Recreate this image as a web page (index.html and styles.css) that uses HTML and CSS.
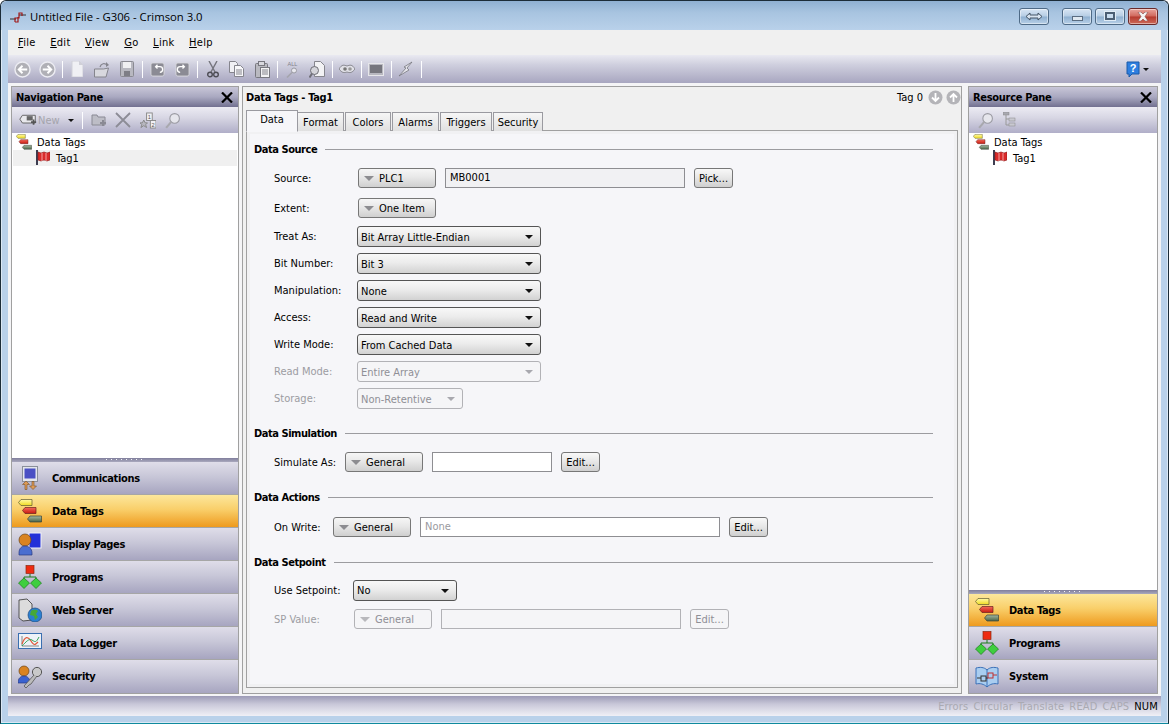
FILE: index.html
```html
<!DOCTYPE html>
<html lang="en">
<head>
<meta charset="utf-8">
<title>Untitled File - G306 - Crimson 3.0</title>
<link rel="stylesheet" href="styles.css">
</head>
<body>
<svg class="defs" width="0" height="0" aria-hidden="true">
  <defs>
    <linearGradient id="gy" x1="0" y1="0" x2="0" y2="1"><stop offset="0" stop-color="#fff9a8"/><stop offset="1" stop-color="#f0dc20"/></linearGradient>
    <linearGradient id="gr" x1="0" y1="0" x2="0" y2="1"><stop offset="0" stop-color="#f46a5a"/><stop offset="1" stop-color="#c81a10"/></linearGradient>
    <linearGradient id="gg" x1="0" y1="0" x2="0" y2="1"><stop offset="0" stop-color="#a4b8a0"/><stop offset="1" stop-color="#4a6448"/></linearGradient>
  </defs>
  <symbol id="tags" viewBox="0 0 24 24">
    <path d="M3 .5h11v6H3L.5 3.500z" fill="url(#gy)" stroke="#5e5a30" stroke-width=".7"/>
    <path d="M7 8.500h11v6H7L4.500 11.500z" fill="url(#gr)" stroke="#6a2020" stroke-width=".7"/>
    <path d="M12 17h11.500v6H12l-2.500-3z" fill="url(#gg)" stroke="#3a4438" stroke-width=".7"/>
  </symbol>
  <symbol id="flag" viewBox="0 0 14 16">
    <path d="M1 0v15" stroke="#3d3d50" stroke-width="2"/>
    <path d="M2 2l3 1 3-1 3 1 3-1v8l-3 1-3-1-3 1-3-1z" fill="#d92a2a" stroke="#8a1a1a" stroke-width=".6"/>
    <path d="M6 3v8M10 3v8" stroke="#f3a0a0"/>
  </symbol>
  <symbol id="comm" viewBox="0 0 24 24">
    <rect x="4.500" y=".5" width="15" height="15" fill="#e4e6ec" stroke="#8a8f9a"/>
    <rect x="6.500" y="2.500" width="11" height="10" fill="#4a50c4"/>
    <path d="M7 15l-3.500 3.500H6v5h2v-5h2.500zM14 23.500l3.500-3.500H15v-4.500h-2V20h-2.500z" fill="#dd9a55" stroke="#7a5025" stroke-width=".6" transform="translate(1 0)"/>
  </symbol>
  <symbol id="pages" viewBox="0 0 24 24">
    <rect x="11" y="1" width="12" height="15" fill="#2330d8" stroke="#f2f2fa"/>
    <circle cx="7" cy="8" r="6" fill="#d98320" stroke="#6a4418" stroke-width=".7"/>
    <path d="M1 21c0-5 3-7 6-7s7 2 7 7v2H1z" fill="#4a6ed0" stroke="#2a3a80" stroke-width=".7"/>
  </symbol>
  <symbol id="prog" viewBox="0 0 24 24">
    <rect x="8" y=".5" width="8" height="8" fill="#ee2b10" stroke="#8a2a10" stroke-width=".7"/>
    <path d="M12 9v3M6 15v-3h12v3" fill="none" stroke="#1d7a1d"/>
    <path d="M6 13l5.500 5L6 23.500.5 18zM18 13l5.500 5-5.500 5.500L12.500 18z" fill="#3fce3f" stroke="#1d7a1d" stroke-width=".7"/>
  </symbol>
  <symbol id="web" viewBox="0 0 24 24">
    <path d="M1 2l8-1 5 5v16l-9 1-4-3z" fill="#dcdcdc" stroke="#333" stroke-width=".8"/>
    <circle cx="17" cy="17" r="7" fill="#2b7fd0" stroke="#1b4a80" stroke-width=".7"/>
    <path d="M13 13c3-2 6-1 7 0l-2 3 2 3-3 3-1-4-4-1z" fill="#45a83a"/>
  </symbol>
  <symbol id="logger" viewBox="0 0 24 20">
    <rect x=".5" y=".5" width="23" height="15" fill="#eef2f8" stroke="#3a6fb0"/>
    <path d="M4 3v10h17" fill="none" stroke="#888"/>
    <path d="M4 11c3-8 6-8 9-3s4 4 7 1" fill="none" stroke="#e05a3a" stroke-width="1.200"/>
    <path d="M4 13c4-4 7-8 10-6s4 3 7-3" fill="none" stroke="#35a35a"/>
  </symbol>
  <symbol id="security" viewBox="0 0 24 24">
    <circle cx="6" cy="6" r="5" fill="#d98320" stroke="#6a4418" stroke-width=".7"/>
    <path d="M0 18c0-5 3-7 6-7s6 2 6 7z" fill="#3a62d0" stroke="#2a3a80" stroke-width=".7"/>
    <circle cx="19" cy="7" r="4.600" fill="#c9c9c9" stroke="#555"/>
    <path d="M16 10L6 21l2 2 3-3 2-1 6-8" fill="#bbb" stroke="#555" stroke-width=".8"/>
  </symbol>
  <symbol id="system" viewBox="0 0 24 22">
    <path d="M1 2c4-1 8-1 11 2 3-3 7-3 11-2v16c-4-1-8 0-11 3-3-3-7-4-11-3z" fill="#a9cdf0" stroke="#3a70b8"/>
    <path d="M12 4v17" stroke="#3a70b8"/>
    <rect x="6" y="10" width="5" height="5" fill="none" stroke="#333"/>
    <path d="M2 12h4M11 12h2" stroke="#333"/>
    <rect x="13" y="7" width="5" height="5" fill="none" stroke="#c03030"/>
    <path d="M18 9h4" stroke="#c03030"/>
  </symbol>
  <symbol id="search" viewBox="0 0 16 16">
    <circle cx="10" cy="6" r="4.500" fill="#e6e6ec" stroke="#9a9aa2"/>
    <path d="M7 9l-5 6" stroke="#a8a8ae" stroke-width="2"/>
  </symbol>
  <symbol id="closex" viewBox="0 0 12 11">
    <path d="M1 .5l10 10M11 .5L1 10.500" stroke="#000" stroke-width="2.200"/>
  </symbol>
</svg>

<div class="window">
  <header class="titlebar">
    <svg class="app-logo" width="16" height="14" viewBox="0 0 16 14"><path d="M0 9h6M9 5h7" stroke="#333" fill="none"/><path d="M5 12V8h4V3h3v3M5 12h3V7" stroke="#a01818" fill="none" stroke-width="1.200"/></svg>
    <span class="title-text">Untitled File - G306 - Crimson 3.0</span>
    <div class="caption-buttons">
      <button class="cap cap-switch" aria-label="Switch"><svg width="18" height="9" viewBox="0 0 18 9"><path d="M1 4.500L5 1v2h8V1l4 3.500L13 8V6H5v2z" fill="#d8e4f0" stroke="#445566"/></svg></button>
      <button class="cap cap-min" aria-label="Minimise"><i class="min-glyph"></i></button>
      <button class="cap cap-max" aria-label="Maximise"><i class="max-glyph"></i></button>
      <button class="cap cap-close" aria-label="Close"><svg width="12" height="9" viewBox="0 0 12 9"><path d="M1 0h3l2 2 2-2h3L8 4.500 11 9H8L6 7 4 9H1l3-4.500z" fill="#f4f4f4" stroke="#703030" stroke-width=".5"/></svg></button>
    </div>
  </header>

  <div class="client">
    <nav class="menubar">
      <span><u>F</u>ile</span><span><u>E</u>dit</span><span><u>V</u>iew</span><span><u>G</u>o</span><span><u>L</u>ink</span><span><u>H</u>elp</span>
    </nav>

    <div class="toolbar">
      <svg width="17" height="17" viewBox="0 0 18 18"><circle cx="9" cy="9" r="8" fill="#b0b0b6" stroke="#ececf2" stroke-width="1.500"/><path d="M14 9H6M9 5L5 9l4 4" stroke="#fff" stroke-width="2" fill="none"/></svg>
      <svg class="g8" width="17" height="17" viewBox="0 0 18 18"><circle cx="9" cy="9" r="8" fill="#b0b0b6" stroke="#ececf2" stroke-width="1.500"/><path d="M4 9h8M9 5l4 4-4 4" stroke="#fff" stroke-width="2" fill="none"/></svg>
      <i class="tsep g6"></i>
      <svg class="g8" width="12" height="16" viewBox="0 0 12 16"><path d="M1 0h7l4 4v12H1z" fill="#f0f0f4" stroke="#d0d0d8"/><path d="M8 0v4h4" fill="#d0d0d8"/></svg>
      <svg class="g11" width="16" height="17" viewBox="0 0 16 17"><path d="M.5 8h9l5-1-2.500 9H.5z" fill="#d8d8de" stroke="#85858d"/><path d="M6 6c1-4 5-4 7-2" stroke="#85858d" fill="none" stroke-width="1.200"/><path d="M12 1l3 3-3 2z" fill="#85858d"/></svg>
      <svg class="g10" width="14" height="16" viewBox="0 0 14 16"><rect x=".5" y=".5" width="13" height="15" rx="1" fill="#b8b8c0" stroke="#8a8a92"/><rect x="3" y="1" width="8" height="6" fill="#f0f0f2"/><rect x="4" y="10" width="6" height="5" fill="#7e7e86"/></svg>
      <i class="tsep g8"></i>
      <svg class="g7" width="15" height="15" viewBox="0 0 16 16"><rect x="1" y="1" width="14" height="14" rx="2" fill="#8b8b94" stroke="#dadade"/><path d="M10.500 11a3 3 0 0 0 0-6H6M8 3L6 5l2 2" stroke="#fff" fill="none" stroke-width="1.400"/></svg>
      <svg class="g10" width="15" height="15" viewBox="0 0 16 16"><rect x="1" y="1" width="14" height="14" rx="2" fill="#8b8b94" stroke="#dadade"/><path d="M5.500 11a3 3 0 0 1 0-6H10M8 3l2 2-2 2" stroke="#fff" fill="none" stroke-width="1.400"/></svg>
      <i class="tsep g7"></i>
      <svg class="g9" width="12" height="17" viewBox="0 0 12 17"><path d="M2 0l6 11M10 0L4 11" stroke="#74747c" stroke-width="1.400"/><circle cx="3" cy="13.500" r="2.300" fill="none" stroke="#4e4e56" stroke-width="1.400"/><circle cx="9" cy="13.500" r="2.300" fill="none" stroke="#4e4e56" stroke-width="1.400"/></svg>
      <svg class="g10" width="15" height="16" viewBox="0 0 15 16"><path d="M.5.5h6l2 2v9H.5z" fill="#f0f0f4" stroke="#85858d"/><path d="M5.500 4.500h6l3 3v8h-9z" fill="#f8f8fa" stroke="#85858d"/><path d="M7 9h6M7 11h6M7 13h6" stroke="#85858d"/></svg>
      <svg class="g11" width="15" height="17" viewBox="0 0 15 17"><rect x=".5" y="2.500" width="12" height="14" rx="1" fill="#b9b9c0" stroke="#77777f"/><rect x="3.500" y=".5" width="6" height="4" fill="#d8d8de" stroke="#77777f"/><rect x="5.500" y="6.500" width="9" height="10" fill="#f2f2f4" stroke="#77777f"/><path d="M7 9h6M7 11h6M7 13h6" stroke="#85858d"/></svg>
      <i class="tsep g7"></i>
      <svg class="g7" width="15" height="17" viewBox="0 0 15 17"><text x="7.500" y="5" class="all-txt">ALL</text><circle cx="9" cy="9.500" r="2.500" fill="#e8e8ee" stroke="#9a9aa2"/><path d="M7 11.500l-5 5" stroke="#a4a4ac" stroke-width="1.600"/></svg>
      <svg class="g9" width="16" height="17" viewBox="0 0 16 17"><path d="M5.500.5h6l4 4v11h-10z" fill="#f2f2f4" stroke="#85858d"/><circle cx="5.500" cy="9.500" r="4" fill="#d4d4da" stroke="#6e6e76"/><path d="M3 12.500l-2.500 4" stroke="#6e6e76" stroke-width="2"/></svg>
      <i class="tsep g7"></i>
      <svg class="g6" width="16" height="10" viewBox="0 0 16 10"><path d="M0 5c3-5 5-4 8-3 3-1 5-2 8 3-3 4-5 4-8 3-3 1-5 1-8-3z" fill="#e0e0e6" stroke="#8a8a92"/><circle cx="6" cy="5" r="1.800" fill="#777"/><circle cx="11" cy="5" r="1.800" fill="#999"/></svg>
      <i class="tsep g6"></i>
      <svg class="g6" width="16" height="13" viewBox="0 0 16 13"><rect x=".5" y=".5" width="15" height="12" fill="#b8b8c0" stroke="#e6e6ea"/><rect x="2" y="2" width="12" height="8" fill="#76767e"/></svg>
      <i class="tsep g7"></i>
      <svg class="g6" width="16" height="16" viewBox="0 0 16 16"><path d="M14 1L6 6l2 1-7 8 10-6-2-2z" fill="#e4e4ea" stroke="#77777f" stroke-width=".8"/></svg>
      <i class="tsep g7"></i>
      <span class="help-wrap">
        <svg width="14" height="17" viewBox="0 0 14 17"><path d="M1 1h12v12H6l-3 3v-3H1z" fill="#2e7fe0" stroke="#1a5aa8"/><text x="7" y="11" class="help-q">?</text></svg>
        <i class="caret-black"></i>
      </span>
    </div>

    <main class="workspace">
      <aside class="pane pane-nav">
        <div class="pane-head"><b>Navigation Pane</b><svg class="x" width="12" height="11"><use href="#closex"/></svg></div>
        <div class="pane-tools">
          <svg width="18" height="14" viewBox="0 0 21 15"><path d="M4 2h15v9H4L1 6.500z" fill="#e8e8ec" stroke="#555"/><rect x="9" y="3" width="7" height="5" fill="#666"/><path d="M14 10h6M17 7v6" stroke="#555" stroke-width="2"/></svg>
          <span class="new-txt">New</span><i class="caret-black caret-new"></i><i class="tsep tsep-new"></i>
          <svg class="pt-folder" width="16" height="14" viewBox="0 0 16 14"><path d="M1 2h5l1 2h7v8H1z" fill="#bdbdc6" stroke="#8a8a94"/><path d="M9 10h6M12 7v6" stroke="#8a8a94" stroke-width="2"/></svg>
          <svg class="pt-del" width="16" height="16" viewBox="0 0 16 16"><path d="M1 1l14 14M15 1L1 15" stroke="#8c8c96" stroke-width="1.800"/></svg>
          <svg class="pt-sort" width="16" height="17" viewBox="0 0 17 17"><rect x="7" y=".5" width="6" height="8" fill="#f0f0f4" stroke="#888"/><text x="10" y="7" class="sort-txt">1</text><rect x="11" y="8.500" width="6" height="8" fill="#f0f0f4" stroke="#888"/><text x="14" y="15" class="sort-txt">2</text><path d="M4 8l1.500 3H8l-2 2 1 3-3-2-3 2 1-3-2-2h2.500z" fill="#b8b8c0" stroke="#888"/></svg>
          <svg class="pt-search" width="17" height="17"><use href="#search"/></svg>
        </div>
        <div class="tree tree-nav">
          <div class="tree-root"><svg width="16" height="16"><use href="#tags"/></svg><span>Data Tags</span></div>
          <div class="tree-item tree-sel"><svg width="14" height="16"><use href="#flag"/></svg><span>Tag1</span></div>
        </div>
        <div class="splitter"><i></i></div>
        <div class="nav-btn"><svg width="24" height="24"><use href="#comm"/></svg><b>Communications</b></div>
        <div class="nav-btn nav-active"><svg width="24" height="24"><use href="#tags"/></svg><b>Data Tags</b></div>
        <div class="nav-btn"><svg width="24" height="24"><use href="#pages"/></svg><b>Display Pages</b></div>
        <div class="nav-btn"><svg width="24" height="24"><use href="#prog"/></svg><b>Programs</b></div>
        <div class="nav-btn"><svg width="24" height="24"><use href="#web"/></svg><b>Web Server</b></div>
        <div class="nav-btn"><svg width="24" height="20"><use href="#logger"/></svg><b>Data Logger</b></div>
        <div class="nav-btn"><svg width="24" height="24"><use href="#security"/></svg><b>Security</b></div>
      </aside>

      <section class="editor">
        <div class="editor-head">
          <b>Data Tags - Tag1</b>
          <span class="tag-nav">Tag 0
            <svg width="15" height="15" viewBox="0 0 15 15"><circle cx="7.500" cy="7.500" r="7" fill="#b4b4b8"/><path d="M7.500 3v8M4 7.500l3.500 3.500L11 7.500" stroke="#fff" stroke-width="1.800" fill="none"/></svg>
            <svg width="15" height="15" viewBox="0 0 15 15"><circle cx="7.500" cy="7.500" r="7" fill="#b4b4b8"/><path d="M7.500 12V4M4 7.500L7.500 4 11 7.500" stroke="#fff" stroke-width="1.800" fill="none"/></svg>
          </span>
        </div>
        <div class="tabs">
          <span class="tab tab-active">Data</span><span class="tab t-format">Format</span><span class="tab t-colors">Colors</span><span class="tab t-alarms">Alarms</span><span class="tab t-triggers">Triggers</span><span class="tab t-security">Security</span>
        </div>
        <div class="panel">
          <h3 class="group group-first"><span>Data Source</span></h3>
          <div class="row row-30"><label>Source:</label><span class="btn b78"><i class="tri"></i>PLC1</span><span class="field f-mb">MB0001</span><span class="btn-small">Pick...</span></div>
          <div class="row row-30"><label>Extent:</label><span class="btn b78"><i class="tri"></i>One Item</span></div>
          <div class="row"><label>Treat As:</label><span class="select s184">Bit Array Little-Endian<i class="caret-black"></i></span></div>
          <div class="row"><label>Bit Number:</label><span class="select s184">Bit 3<i class="caret-black"></i></span></div>
          <div class="row"><label>Manipulation:</label><span class="select s184">None<i class="caret-black"></i></span></div>
          <div class="row"><label>Access:</label><span class="select s184">Read and Write<i class="caret-black"></i></span></div>
          <div class="row"><label>Write Mode:</label><span class="select s184">From Cached Data<i class="caret-black"></i></span></div>
          <div class="row dis"><label>Read Mode:</label><span class="select s184">Entire Array<i class="caret-black"></i></span></div>
          <div class="row dis"><label>Storage:</label><span class="select s106">Non-Retentive<i class="caret-black"></i></span></div>

          <h3 class="group"><span>Data Simulation</span></h3>
          <div class="row row-sim"><label class="l-sim">Simulate As:</label><span class="btn b78"><i class="tri"></i>General</span><span class="field f-sim"></span><span class="btn-small">Edit...</span></div>

          <h3 class="group group-12"><span>Data Actions</span></h3>
          <div class="row row-write"><label class="l-write">On Write:</label><span class="btn b78"><i class="tri"></i>General</span><span class="field f-write">None</span><span class="btn-small">Edit...</span></div>

          <h3 class="group group-12"><span>Data Setpoint</span></h3>
          <div class="row row-set"><label class="l-set">Use Setpoint:</label><span class="select s104">No<i class="caret-black"></i></span></div>
          <div class="row row-sp dis"><label class="l-sp">SP Value:</label><span class="btn b78"><i class="tri"></i>General</span><span class="field f-sp"></span><span class="btn-small">Edit...</span></div>
        </div>
      </section>

      <aside class="pane pane-res">
        <div class="pane-head"><b>Resource Pane</b><svg class="x" width="12" height="11"><use href="#closex"/></svg></div>
        <div class="pane-tools">
          <svg class="pr-search" width="17" height="17"><use href="#search"/></svg>
          <svg class="pr-tree" width="14" height="16" viewBox="0 0 14 16"><rect x="0" y="0" width="6" height="3" fill="#a8a8b0" stroke="#888" stroke-width=".5"/><rect x="6" y="6" width="6" height="3" fill="#c8c8d0" stroke="#888" stroke-width=".5"/><rect x="6" y="11" width="6" height="3" fill="#c8c8d0" stroke="#888" stroke-width=".5"/><path d="M3 3v10h3M3 7h3" stroke="#999" fill="none"/></svg>
        </div>
        <div class="tree tree-res">
          <div class="tree-root"><svg width="16" height="16"><use href="#tags"/></svg><span>Data Tags</span></div>
          <div class="tree-item"><svg width="14" height="16"><use href="#flag"/></svg><span>Tag1</span></div>
        </div>
        <div class="splitter"><i></i></div>
        <div class="nav-btn nav-active"><svg width="24" height="24"><use href="#tags"/></svg><b>Data Tags</b></div>
        <div class="nav-btn"><svg width="24" height="24"><use href="#prog"/></svg><b>Programs</b></div>
        <div class="nav-btn"><svg width="24" height="22"><use href="#system"/></svg><b>System</b></div>
      </aside>
    </main>

    <footer class="statusbar">
      <span>Errors</span><span>Circular</span><span>Translate</span><span>READ</span><span>CAPS</span><span class="on">NUM</span>
    </footer>
  </div>
</div>
</body>
</html>
```

FILE: styles.css
```css
* { box-sizing: border-box; }
html, body { margin: 0; padding: 0; width: 1169px; height: 724px; overflow: hidden; background: #fff; }
body, button { font-family: "DejaVu Sans Condensed", "DejaVu Sans", sans-serif; font-stretch: condensed; font-size: 11px; color: #000; }
.defs { position: absolute; }
u { text-decoration: underline; }
i { display: block; font-style: normal; }

.window {
  width: 1169px; height: 724px; display: flex; flex-direction: column;
  background: #b9d1ea; border: 1px solid #1c2c38; border-bottom-color: #0f8a9e; border-radius: 6px 6px 0 0;
  box-shadow: inset 0 0 0 1px #dbe8f4;
}
.titlebar {
  height: 29px; display: flex; align-items: center; padding: 2px 0 0 9px; flex: none;
  background: linear-gradient(to bottom, #8fb0d2 0, #a8c4e0 40%, #b9d1ea 100%);
  border-radius: 6px 6px 0 0;
}
.app-logo { margin-right: 4px; }
.title-text { font-family: "Open Sans", sans-serif; font-stretch: normal; font-size: 11.300px; color: #000; }
.caption-buttons { margin-left: auto; display: flex; margin-right: 10px; margin-top: -1px; }
.cap {
  height: 17px; width: 30px; border: 1px solid #4e6a86; border-radius: 3px; padding: 0; display: flex; align-items: center; justify-content: center;
  background: linear-gradient(to bottom, #d8e6f4 0, #b6cde4 48%, #8fb0d0 52%, #b8d0e8 100%); margin-left: 3px;
  box-shadow: inset 0 0 0 1px rgba(255,255,255,.45);
}
.cap-switch { margin-right: 10px; }
.cap-close { background: linear-gradient(to bottom, #e9a49c 0, #d0685c 48%, #b63a2e 52%, #cc6a5a 100%); border-color: #6a2a2a; }
.min-glyph { width: 11px; height: 5px; margin-top: 5px; background: #dfe8f0; border: 1px solid #5a6c80; }
.max-glyph { width: 10px; height: 8px; border: 2px solid #4a5e74; background: #c8dcef; box-shadow: 0 0 0 1px #e0ecf6; }

.client { flex: 1; min-height: 0; display: flex; flex-direction: column; margin: 0 7px 7px; background: #f0f0f0; }
.menubar { height: 25px; flex: none; display: flex; align-items: center; padding: 0 0 1px 10px; background: #f0f0f0; letter-spacing: .3px; }
.menubar span { margin-right: 14.500px; }
.toolbar {
  height: 28px; flex: none; display: flex; align-items: center; padding: 0 12px 0 6px;
  background: linear-gradient(to bottom, #e9e9f1 0, #cfcfde 35%, #a8a6c0 100%);
}
.toolbar svg { flex: none; }
.g6 { margin-left: 6px; }
.g7 { margin-left: 7px; }
.g8 { margin-left: 8px; }
.g9 { margin-left: 9px; }
.g10 { margin-left: 10px; }
.g11 { margin-left: 11px; }
.tsep { width: 1px; height: 17px; background: #fdfdff; flex: none; }
.all-txt { font: 5.500px "Liberation Sans", sans-serif; fill: #83838b; text-anchor: middle; }
.sort-txt { font: 6px "Liberation Sans", sans-serif; fill: #555; text-anchor: middle; }
.help-wrap { margin-left: auto; display: flex; align-items: center; gap: 3px; }
.help-q { font: bold 11px "Liberation Sans", sans-serif; fill: #fff; text-anchor: middle; }
.caret-black { width: 0; height: 0; border-left: 4px solid transparent; border-right: 4px solid transparent; border-top: 4px solid #111; }
.help-wrap .caret-black { border-left-width: 3px; border-right-width: 3px; border-top-width: 3px; }

.workspace { flex: 1; min-height: 0; display: flex; padding: 3px 3px 2px; background: #f4f4f6; }
.pane { display: flex; flex-direction: column; border: 1px solid #a0a0a0; background: #fff; flex: none; }
.pane-nav { width: 228px; margin-right: 3px; }
.pane-res { width: 190px; margin-left: 6px; }
.pane-head {
  height: 20px; flex: none; display: flex; align-items: center; justify-content: space-between; padding: 0 4px;
  background: linear-gradient(to bottom, #c8c6d8 0, #a9a8c0 50%, #727090 100%);
}
b { letter-spacing: -.3px; }
.x { margin-right: 1px; }
.pane-tools {
  height: 26px; flex: none; display: flex; align-items: center; padding: 0 0 0 7px;
  background: linear-gradient(to bottom, #ecebf3 0, #d8d7e4 40%, #b0aec8 100%);
}
.new-txt { color: #a4a4ac; margin-left: 1px; }
.caret-new { margin-left: 8px; border-left-width: 3px; border-right-width: 3px; border-top-width: 3px; }
.tsep-new { margin: 0 7px 0 8px; }
.pt-folder { margin-left: 1px; }
.pt-del { margin-left: 8px; }
.pt-sort { margin-left: 9px; }
.pt-search { margin-left: 8px; }
.pr-search { margin-left: 1px; }
.pr-tree { margin-left: 9px; }

.tree { flex: 1; min-height: 0; background: #fff; padding-top: 1px; }
.tree-root, .tree-item { height: 16px; display: flex; align-items: center; }
.tree-root { padding-left: 4px; }
.tree-root span { margin-left: 5px; }
.tree-item { margin: 0 1px; padding-left: 23px; }
.tree-item span { margin-left: 6px; }
.tree-sel { background: #f0f0f0; }
.splitter { height: 5px; flex: none; background: linear-gradient(to bottom, #807e9c, #a9a8bd); display: flex; justify-content: center; border-bottom: 1px solid #d8d8e0; margin-bottom: -1px; }
.splitter i { width: 38px; height: 1px; margin-top: 1px; background: repeating-linear-gradient(to right, #f4f4f8 0 1px, transparent 1px 5px); }
.nav-btn {
  height: 33px; flex: none; display: flex; align-items: center; padding-left: 6px; border-bottom: 1px solid #a6a6a6;
  background: linear-gradient(to bottom, #dfdde9 0, #c8c7d8 45%, #a7a5c0 100%);
}
.nav-btn:last-child { border-bottom: 0; }
.nav-btn svg { flex: none; }
.nav-btn b { margin-left: 10px; letter-spacing: -.35px; }
.nav-active { background: linear-gradient(to bottom, #fce79c 0, #f9cf6a 45%, #ee9a1e 100%); }

.editor { flex: 1; min-width: 0; display: flex; flex-direction: column; border: 1px solid #a0a0a0; background: #f0f0f0; padding: 0 3px 5px; }
.editor-head { height: 20px; flex: none; display: flex; align-items: center; justify-content: space-between; }
.tag-nav { display: flex; align-items: center; gap: 3px; margin-right: -3px; }
.tag-nav svg:first-of-type { margin-left: 2px; }
.tabs { height: 24px; flex: none; display: flex; align-items: flex-end; margin-bottom: -1px; position: relative; z-index: 1; }
.tab {
  height: 19px; display: flex; align-items: center; justify-content: center; padding-top: 1px; border: 1px solid #9a9aa0; border-bottom: 0; margin-right: 1px;
  background: linear-gradient(to bottom, #f6f6f6, #e0e0e0);
}
.tab-active { width: 52px; background: #f6f6f9; padding: 0 0 3px; margin-right: 0; border-bottom: 1px solid #f6f6f9; height: 22px; margin-bottom: -1px; }
.t-format { width: 46px; border-left: 0; }
.t-colors { width: 46px; }
.t-alarms { width: 47px; }
.t-triggers { width: 52px; }
.t-security { width: 50px; }
.panel { flex: 1; min-height: 0; border: 1px solid #a0a0a0; background: #f6f6f9; padding: 8px 24px 0 7px; box-shadow: inset 0 0 0 3px #f1f1f3; }
.group { margin: 11px 0 0; height: 20px; display: flex; align-items: center; font-size: 11px; font-weight: bold; letter-spacing: -.45px; }
.group::after { content: ""; flex: 1; height: 1px; background: #9c9ca0; margin-left: 8px; }
.group-first { margin: 0 0 4px; }
.group-12 { margin-top: 12px; }
.row { height: 27px; display: flex; align-items: center; padding-left: 20px; }
.row-30 { height: 30px; }
.row-sim { height: 26px; margin-top: 6px; }
.row-write { height: 26px; margin-top: 7px; }
.row-set { height: 26px; margin-top: 5px; }
.row-sp { height: 26px; margin-top: 3px; }
.row label { width: 83px; flex: none; }
.row label.l-sim { width: 71px; }
.row label.l-write { width: 59px; }
.row label.l-set { width: 79px; }
.row label.l-sp { width: 80px; }
.btn {
  height: 20px; display: flex; align-items: center; padding-left: 5px; flex: none;
  border: 1px solid #777; border-radius: 3px; background: linear-gradient(to bottom, #f6f6f6 0, #e8e8e8 45%, #cfcfcf 100%);
}
.row-30 .btn { margin-left: 1px; }
.b78 { width: 78px; }
.tri { width: 0; height: 0; border-left: 5px solid transparent; border-right: 5px solid transparent; border-top: 5px solid #8c8c90; margin-right: 5px; }
.field { height: 20px; flex: none; margin-left: 9px; border: 1px solid #8e8e92; background: #fff; padding: 1px 4px; display: block; line-height: 15px; }
.f-mb { width: 240px; background: #f1f1f3; }
.f-sim { width: 120px; }
.f-write { width: 300px; color: #9a9aa0; }
.f-sp { width: 240px; }
.btn-small { height: 20px; width: 39px; flex: none; margin-left: 9px; display: flex; align-items: center; justify-content: center; border: 1px solid #777; border-radius: 3px; background: linear-gradient(to bottom, #f8f8f8 0, #e8e8e8 45%, #cfcfcf 100%); }
.select {
  height: 21px; flex: none; display: flex; align-items: center; justify-content: space-between; padding: 1px 7px 0 3px; border: 1px solid #555; border-radius: 3px;
  background: linear-gradient(to bottom, #f8f8f8 0, #ececec 45%, #d2d2d2 100%);
}
.s184 { width: 184px; }
.s106 { width: 106px; }
.s104 { width: 104px; }
.dis, .dis label { color: #9c9ca2; }
.dis .select, .dis .btn, .dis .field, .dis .btn-small { background: #f5f5f7; border-color: #b2b2b6; color: #8f8f96; }
.dis .caret-black { border-top-color: #a8a8ae; }
.dis .tri { border-top-color: #b8b8bc; }

.statusbar {
  height: 20px; flex: none; display: flex; justify-content: flex-end; align-items: center; gap: 5px; padding-right: 3px;
  background: linear-gradient(to bottom, #9c9ab6 0, #c8c7d8 40%, #f0f0f6 100%); color: #aaaab2; letter-spacing: .18px;
}
.statusbar .on { color: #000; }
```
